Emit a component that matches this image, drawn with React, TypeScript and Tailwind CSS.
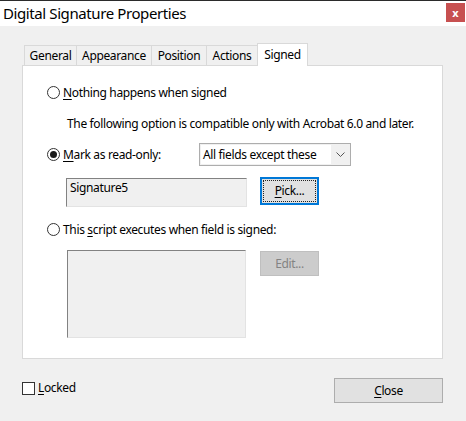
import React from "react";

function Radio({ checked }: { checked?: boolean }) {
  return (
    <span className="w-[13px] h-[13px] rounded-full border border-[#333333] bg-white flex items-center justify-center shrink-0">
      {checked && <span className="w-[7px] h-[7px] rounded-full bg-[#1a1a1a]" />}
    </span>
  );
}

export default function App() {
  return (
    <div
      className="w-[466px] h-[421px] bg-[#f0f0f0] overflow-hidden text-[12px] tracking-[-0.35px] text-black flex flex-col"
      style={{ fontFamily: '"Noto Sans", "Open Sans", sans-serif' }}
    >
      {/* Title bar */}
      <div className="h-[26px] bg-white border-t border-[#2b2b2b] flex items-start justify-between shrink-0">
        <span className="ml-[3px] mt-[2px] text-[15px] tracking-[-0.4px] leading-[20px]">Digital Signature Properties</span>
        <div className="w-[19px] h-[19px] mt-[2px] mr-[1px] bg-[#c75050] flex items-center justify-center text-white text-[11px] font-bold leading-none tracking-normal">
          x
        </div>
      </div>

      {/* Tabs */}
      <div className="ml-[24px] mt-[17px] h-[22px] flex items-end relative z-10">
        <div className="w-[52px] h-[20px] border-t border-l border-[#d9d9d9] flex items-center justify-center">General</div>
        <div className="w-[75px] h-[20px] border-t border-l border-[#d9d9d9] flex items-center justify-center">Appearance</div>
        <div className="w-[55px] h-[20px] border-t border-l border-[#d9d9d9] flex items-center justify-center">Position</div>
        <div className="w-[51px] h-[20px] border-t border-l border-[#d9d9d9] flex items-center justify-center">Actions</div>
        <div className="w-[51px] h-[23px] -mb-px bg-white border-t border-l border-r border-[#d9d9d9] flex items-start justify-center pt-[2px]">Signed</div>
      </div>

      {/* Panel */}
      <div className="ml-[22px] w-[421px] h-[294px] bg-white border border-[#d9d9d9] flex flex-col pl-[24px] pt-[18px]">
        <div className="h-[17px] flex items-center gap-[3px]">
          <Radio />
          <span>
            <u className="underline-offset-2">N</u>othing happens when signed
          </span>
        </div>
        <div className="h-[17px] mt-[14px] ml-[20px] flex items-center">
          The following option is compatible only with Acrobat 6.0 and later.
        </div>
        <div className="h-[23px] mt-[11px] flex items-center">
          <div className="w-[152px] flex items-center gap-[3px]">
            <Radio checked />
            <span>
              <u className="underline-offset-2">M</u>ark as read-only:
            </span>
          </div>
          <div className="w-[152px] h-[23px] border border-[#adadad] bg-[#f0f0f0] flex items-stretch p-[1px]">
            <div className="flex-1 bg-white flex items-center pl-[2px]">All fields except these</div>
            <div className="w-[18px] flex items-center justify-center">
              <svg width="9" height="6" viewBox="0 0 9 6">
                <path d="M0.5 0.5 L4.5 4.5 L8.5 0.5" fill="none" stroke="#555" strokeWidth="1" />
              </svg>
            </div>
          </div>
        </div>
        <div className="h-[30px] mt-[11px] ml-[19px] flex items-start gap-[13px]">
          <div className="w-[181px] h-[29px] mt-[1px] bg-[#f0f0f0] border-t border-l border-t-[#828282] border-l-[#828282] border-r border-b border-r-[#e3e3e3] border-b-[#e3e3e3] pl-[3px] leading-[17px]">
            Signature5
          </div>
          <div className="w-[59px] h-[28px] bg-[#e1e1e1] border-2 border-[#0078d7] p-[1px] flex">
            <div className="flex-1 border border-dotted border-[#222] flex items-center justify-center">
              <span>
                <u className="underline-offset-2">P</u>ick...
              </span>
            </div>
          </div>
        </div>
        <div className="h-[17px] mt-[14px] flex items-center gap-[3px]">
          <Radio />
          <span>
            This <u className="underline-offset-2">s</u>cript executes when field is signed:
          </span>
        </div>
        <div className="mt-[12px] ml-[20px] flex items-start gap-[14px]">
          <div className="w-[179px] h-[88px] bg-[#f0f0f0] border-t border-l border-t-[#828282] border-l-[#828282] border-r border-b border-r-[#e3e3e3] border-b-[#e3e3e3]" />
          <div className="w-[59px] h-[25px] mt-[1px] bg-[#cccccc] border border-[#bfbfbf] text-[#838383] flex items-center justify-center">
            Edit...
          </div>
        </div>
      </div>

      {/* Bottom */}
      <div className="mt-[19px] ml-[22px] w-[421px] flex items-start justify-between">
        <div className="flex items-center gap-[3px] mt-[1px]">
          <span className="w-[13px] h-[13px] border border-[#333333] bg-white" />
          <span>
            <u className="underline-offset-2">L</u>ocked
          </span>
        </div>
        <div className="w-[109px] h-[25px] bg-[#e1e1e1] border border-[#adadad] flex items-center justify-center">
          <span>
            <u className="underline-offset-2">C</u>lose
          </span>
        </div>
      </div>
    </div>
  );
}
